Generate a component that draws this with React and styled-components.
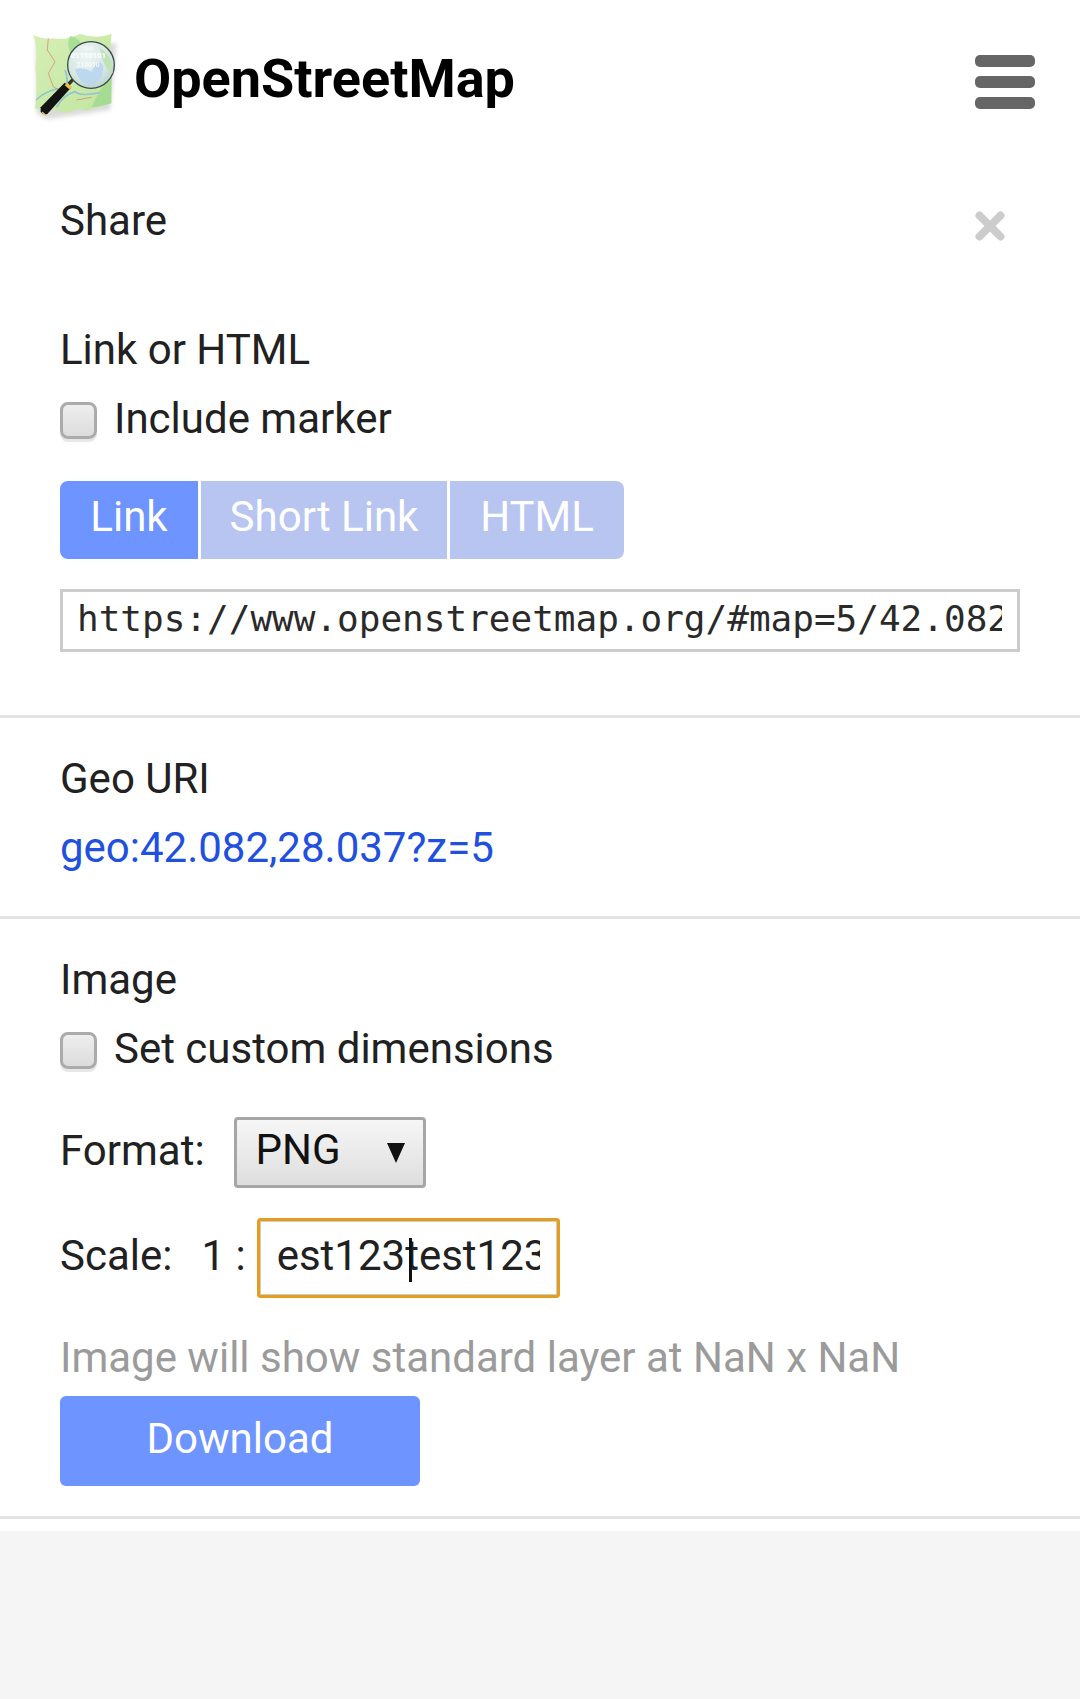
import React from 'react';
import styled, { createGlobalStyle } from 'styled-components';

const Global = createGlobalStyle`
  html, body { margin: 0; padding: 0; background: #f5f5f5; }
  * { box-sizing: border-box; }
  body { font-family: Roboto, "Liberation Sans", sans-serif; font-size: 42px; line-height: 68.75px; color: #212121; }
`;

const Page = styled.div`width: 1080px; min-height: 1699px; background: #f5f5f5;`;
const Panel = styled.div`background: #fff; height: 1531px; overflow: hidden;`;
const Header = styled.header`height: 185px; display: flex; align-items: flex-start; justify-content: space-between; padding: 20px 45px 0 20px;`;
const Brand = styled.div`display: flex; align-items: flex-start; gap: 4px;`;
const LogoSvg = styled.svg`width: 110px; height: 110px; display: block;`;
const Title = styled.h1`margin: 19px 0 0; font-size: 54px; line-height: 80px; font-weight: 700; color: #000; letter-spacing: 0;`;
const Burger = styled.button`margin-top: 35px; padding: 0; border: 0; background: none; width: 60px; display: flex; flex-direction: column; gap: 9px;`;
const BurgerBar = styled.span`display: block; height: 12px; border-radius: 5px; background: #666;`;

const ShareRow = styled.div`display: flex; justify-content: space-between; align-items: flex-start; height: 130px; padding: 0 75px 0 60px;`;
const ShareTitle = styled.h2`margin: 1px 0 0; font-size: 42px; line-height: 70px; font-weight: 400;`;
const CloseSvg = styled.svg`width: 30px; height: 30px; margin-top: 26px; display: block;`;

const Section = styled.section`padding: ${p => p.$top}px 60px 0; height: ${p => p.$h}px; border-bottom: 3px solid #e4e4e4;`;
const Heading = styled.div`height: 69px; padding-top: 1px;`;
const CheckLine = styled.label`display: flex; align-items: center; gap: 17px; height: 69px;`;
const CheckText = styled.span`position: relative; top: 1px;`;
const Check = styled.span`width: 37px; height: 37px; border-radius: 8px; border: 3px solid #ababab; background: linear-gradient(#eeeeee, #dcdcdc); box-shadow: 0 3px 0 #e8e8e8; flex: none; position: relative; top: 2px;`;

const Tabs = styled.div`display: flex; gap: 3px; margin-top: 28px; width: max-content;`;
const Tab = styled.a`
  width: ${p => p.$w}px; height: 78px; padding-bottom: 5px; display: flex; align-items: center; justify-content: center; color: #fff;
  background: ${p => p.$active ? '#6d94ff' : '#b7c5f0'};
  &:first-child { border-radius: 8px 0 0 8px; }
  &:last-child { border-radius: 0 8px 8px 0; }
`;
const LinkBox = styled.input`
  display: block; width: 960px; height: 63px; margin-top: 30px; border: 3px solid #cccccc; padding: 0 15px 4px 14px;
  font-family: "DejaVu Sans Mono", monospace; font-size: 36px; color: #2a2a2a; background: #fff; outline: none; border-radius: 0;
`;
const GeoLink = styled.a`display: block; color: #2150de; height: 69px; padding-top: 1px;`;

const FormatRow = styled.div`display: flex; align-items: center; height: 71px; margin-top: 34px;`;
const RowLabel = styled.span`display: block; position: relative; top: ${p => p.$top}px;`;
const SelectBox = styled.div`
  display: flex; align-items: center; justify-content: space-between; width: 192px; height: 71px; margin-left: 29px;
  border: 3px solid #a6a6a6; border-radius: 4px; padding: 0 18px 4px 19px;
  background: linear-gradient(#f6f6f6, #dedede); color: #111;
`;
const Arrow = styled.span`width: 0; height: 0; margin-top: 5px; border-left: 9px solid transparent; border-right: 9px solid transparent; border-top: 20px solid #111;`;

const ScaleRow = styled.div`display: flex; align-items: center; height: 80px; margin-top: 30px;`;
const ScaleOne = styled.span`margin-left: 29px; position: relative; top: -2px;`;
const ScaleBox = styled.div`
  position: relative; width: 303px; height: 80px; margin-left: 11px; padding: 0 16px 4px 16px;
  border: 4px solid #cccccc; outline: 3px solid #e69d1d; outline-offset: -3px; border-radius: 4px;
  display: flex; align-items: center; background: #fff;
`;
const ScaleText = styled.span`display: block; overflow: hidden; white-space: nowrap; width: 100%; color: #212121;`;
const Caret = styled.span`position: absolute; left: 148px; top: 16px; width: 3px; height: 44px; background: #111;`;
const Hint = styled.div`color: #9b9b9b; height: 69px; margin-top: 26px;`;
const Download = styled.button`
  display: block; width: 360px; height: 90px; margin-top: 3px; padding: 0 0 3px; border: 0; border-radius: 6px;
  background: #6d94ff; color: #fff; font: inherit;
`;

const Logo = () => (
  <LogoSvg viewBox="0 0 330 330" aria-label="OpenStreetMap logo">
    <defs>
      <radialGradient id="lens" cx="40%" cy="30%" r="75%">
        <stop offset="0" stopColor="#eef4f3" />
        <stop offset="0.65" stopColor="#d5e7e3" />
        <stop offset="1" stopColor="#b9d3cc" />
      </radialGradient>
      <filter id="soft" x="-20%" y="-20%" width="140%" height="140%">
        <feGaussianBlur stdDeviation="6" />
      </filter>
      <linearGradient id="map" x1="0" y1="0" x2="1" y2="1">
        <stop offset="0" stopColor="#d6efb4" />
        <stop offset="1" stopColor="#c0e6a0" />
      </linearGradient>
    </defs>
    <path d="M48 70 L50 280 L80 298 L270 270 L290 70 Z" fill="#888" opacity="0.3" filter="url(#soft)" />
    <path d="M40 45 Q75 60 100 55 Q135 62 180 42 Q230 58 275 42 Q268 90 276 140 Q268 200 274 250 Q230 262 200 272 Q170 262 140 280 Q90 262 45 266 Q54 200 46 140 Q55 95 40 45 Z" fill="url(#map)" />
    <path d="M150 48 Q180 52 190 85 L160 110 Q135 80 150 48 Z" fill="#a9de96" />
    <path d="M275 170 Q240 200 215 262 Q250 258 274 250 Z" fill="#a6dc92" />
    <path d="M48 240 Q85 205 130 205 Q150 190 135 150 M110 262 Q130 225 165 215 Q180 230 240 218" fill="none" stroke="#94c3d6" strokeWidth="5" />
    <path d="M85 55 L82 90 L105 125 L85 160 L100 200 L125 215 M170 240 L215 232" fill="none" stroke="#d9907c" strokeWidth="2.5" />
    <path d="M62 262 L134 188 L152 204 L82 282 Q70 286 62 276 Z" fill="#131313" />
    <path d="M134 196 L142 188 L156 200 L148 208 Z" fill="#f0c33a" />
    <path d="M66 276 L76 285" stroke="#f2c53d" strokeWidth="4" fill="none" />
    <line x1="165" y1="172" x2="146" y2="192" stroke="#333" strokeWidth="10" />
    <circle cx="213" cy="135" r="70" fill="url(#lens)" stroke="#3f4a4a" strokeWidth="4" />
    <path d="M165 148 Q190 140 215 155 Q235 110 248 135 Q255 180 215 196 Q180 195 165 148 Z" fill="#bcd7ee" />
    <path d="M240 85 Q282 110 278 160 Q252 150 240 85 Z" fill="#bfe2b6" />
    <text x="152" y="114" fontFamily="Roboto, sans-serif" fontSize="23" fontWeight="700" fill="#ffffff">01110101</text>
    <text x="180" y="90" fontFamily="Roboto, sans-serif" fontSize="17" fontWeight="700" fill="#ffffff" opacity="0.7">1100</text>
    <text x="170" y="142" fontFamily="Roboto, sans-serif" fontSize="20" fontWeight="700" fill="#ffffff" opacity="0.8">210010</text>
  </LogoSvg>
);

const Close = () => (
  <CloseSvg viewBox="0 0 30 30">
    <path d="M4.5 4.5 L25.5 25.5 M25.5 4.5 L4.5 25.5" stroke="#cccccc" strokeWidth="8" strokeLinecap="round" />
  </CloseSvg>
);

export default function App() {
  return (
    <Page>
      <Global />
      <Panel>
        <Header>
          <Brand>
            <Logo />
            <Title>OpenStreetMap</Title>
          </Brand>
          <Burger aria-label="Menu">
            <BurgerBar /><BurgerBar /><BurgerBar />
          </Burger>
        </Header>
        <ShareRow>
          <ShareTitle>Share</ShareTitle>
          <Close />
        </ShareRow>
        <Section $top={0} $h={403}>
          <Heading>Link or HTML</Heading>
          <CheckLine><Check /><CheckText>Include marker</CheckText></CheckLine>
          <Tabs>
            <Tab $active $w={138}>Link</Tab>
            <Tab $w={246}>Short Link</Tab>
            <Tab $w={174}>HTML</Tab>
          </Tabs>
          <LinkBox readOnly value="https://www.openstreetmap.org/#map=5/42.082/28.037" />
        </Section>
        <Section $top={26} $h={201}>
          <Heading>Geo URI</Heading>
          <GeoLink>geo:42.082,28.037?z=5</GeoLink>
        </Section>
        <Section $top={26} $h={600}>
          <Heading>Image</Heading>
          <CheckLine><Check /><CheckText>Set custom dimensions</CheckText></CheckLine>
          <FormatRow>
            <RowLabel $top={-1}>Format:</RowLabel>
            <SelectBox>PNG<Arrow /></SelectBox>
          </FormatRow>
          <ScaleRow>
            <RowLabel $top={-2}>Scale:</RowLabel>
            <ScaleOne>1 :</ScaleOne>
            <ScaleBox>
              <ScaleText>est123test123test123</ScaleText>
              <Caret />
            </ScaleBox>
          </ScaleRow>
          <Hint>Image will show standard layer at NaN x NaN</Hint>
          <Download>Download</Download>
        </Section>
      </Panel>
    </Page>
  );
}
